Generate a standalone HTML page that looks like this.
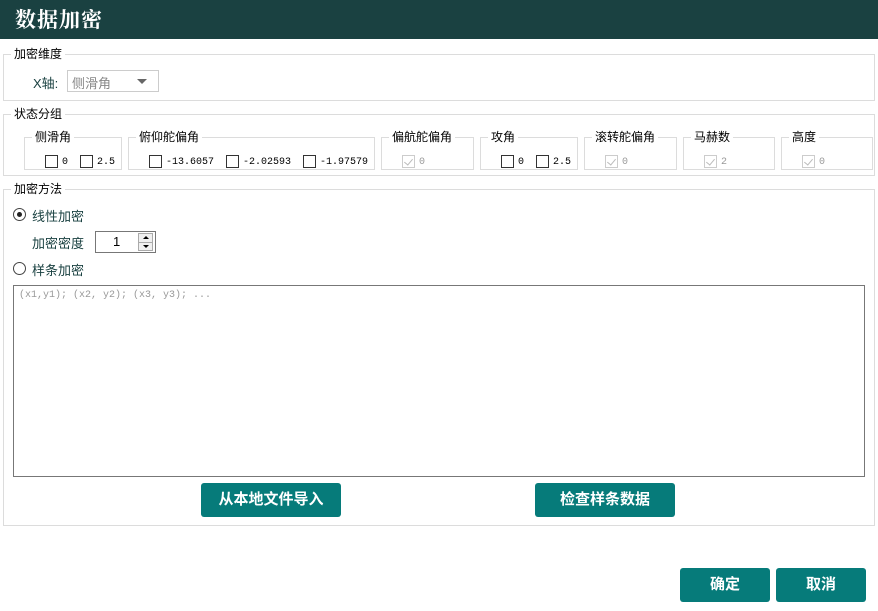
<!DOCTYPE html>
<html><head><meta charset="utf-8"><style>
*{margin:0;padding:0;box-sizing:border-box}
body{width:878px;height:611px;background:#fff;position:relative;overflow:hidden;font-family:"Liberation Sans","Noto Sans CJK SC",sans-serif;font-size:12px;color:#000}
.a{position:absolute}
.hdr{left:0;top:0;width:878px;height:39px;background:#1a4141;color:#fff;font-size:21px;font-weight:bold;padding:4px 0 0 15px;font-family:"Liberation Serif","Noto Serif CJK SC",serif;letter-spacing:1px}
.g{position:absolute;border:1px solid #dcdcdc}
.lg{position:absolute;background:#fff;padding:0 3px;font-size:12px;line-height:14px;white-space:nowrap}
.cb{position:absolute;width:13px;height:13px;border:1px solid #333;background:#fff}
.cd{position:absolute;width:13px;height:13px;border:1px solid #ccc;background:#fff}
.cd:after{content:"";position:absolute;left:3px;top:1px;width:4px;height:7px;border-right:1px solid #bbb;border-bottom:1px solid #bbb;transform:rotate(40deg)}
.t{position:absolute;font-family:"Liberation Mono",monospace;font-size:10px;line-height:13px;white-space:nowrap}
.td{color:#999}
.btn{position:absolute;background:#067b7a;color:#fff;border-radius:3px;font-size:15px;font-weight:bold;text-align:center;line-height:33px;height:34px}
</style></head><body>
<div class="a hdr">数据加密</div>

<div class="g" style="left:3px;top:54px;width:872px;height:47px"></div>
<div class="lg" style="left:11px;top:47px">加密维度</div>
<div class="a" style="left:33px;top:73px;color:#1a4141;font-size:13px">X轴:</div>
<div class="a" style="left:67px;top:70px;width:92px;height:22px;border:1px solid #ccc;color:#888;font-size:13px;padding:2px 0 0 4px">侧滑角<span style="position:absolute;left:69px;top:8px;border-left:5px solid transparent;border-right:5px solid transparent;border-top:5px solid #666"></span></div>

<div class="g" style="left:3px;top:114px;width:872px;height:62px"></div>
<div class="lg" style="left:11px;top:107px">状态分组</div>

<div class="g" style="left:24px;top:137px;width:98px;height:33px"></div><div class="lg" style="left:32px;top:130px">侧滑角</div>
<div class="cb" style="left:45px;top:155px"></div><div class="t" style="left:62px;top:156px">0</div>
<div class="cb" style="left:80px;top:155px"></div><div class="t" style="left:97px;top:156px">2.5</div>

<div class="g" style="left:128px;top:137px;width:247px;height:33px"></div><div class="lg" style="left:136px;top:130px">俯仰舵偏角</div>
<div class="cb" style="left:149px;top:155px"></div><div class="t" style="left:166px;top:156px">-13.6057</div>
<div class="cb" style="left:226px;top:155px"></div><div class="t" style="left:243px;top:156px">-2.02593</div>
<div class="cb" style="left:303px;top:155px"></div><div class="t" style="left:320px;top:156px">-1.97579</div>

<div class="g" style="left:381px;top:137px;width:93px;height:33px"></div><div class="lg" style="left:389px;top:130px">偏航舵偏角</div>
<div class="cd" style="left:402px;top:155px"></div><div class="t td" style="left:419px;top:156px">0</div>

<div class="g" style="left:480px;top:137px;width:98px;height:33px"></div><div class="lg" style="left:488px;top:130px">攻角</div>
<div class="cb" style="left:501px;top:155px"></div><div class="t" style="left:518px;top:156px">0</div>
<div class="cb" style="left:536px;top:155px"></div><div class="t" style="left:553px;top:156px">2.5</div>

<div class="g" style="left:584px;top:137px;width:93px;height:33px"></div><div class="lg" style="left:592px;top:130px">滚转舵偏角</div>
<div class="cd" style="left:605px;top:155px"></div><div class="t td" style="left:622px;top:156px">0</div>

<div class="g" style="left:683px;top:137px;width:92px;height:33px"></div><div class="lg" style="left:691px;top:130px">马赫数</div>
<div class="cd" style="left:704px;top:155px"></div><div class="t td" style="left:721px;top:156px">2</div>

<div class="g" style="left:781px;top:137px;width:92px;height:33px"></div><div class="lg" style="left:789px;top:130px">高度</div>
<div class="cd" style="left:802px;top:155px"></div><div class="t td" style="left:819px;top:156px">0</div>

<div class="g" style="left:3px;top:189px;width:872px;height:337px"></div>
<div class="lg" style="left:11px;top:182px">加密方法</div>
<div class="a" style="left:13px;top:208px;width:13px;height:13px;border:1px solid #444;border-radius:50%"><div style="position:absolute;left:3px;top:3px;width:5px;height:5px;border-radius:50%;background:#222"></div></div>
<div class="a" style="left:32px;top:206px;font-size:13px;color:#1a4141">线性加密</div>
<div class="a" style="left:32px;top:233px;font-size:13px;color:#1a4141">加密密度</div>
<div class="a" style="left:95px;top:231px;width:61px;height:22px;border:1px solid #777;font-size:13px;padding:2px 0 0 17px">1</div>
<div class="a" style="left:138px;top:233px;width:15px;height:18px;border:1px solid #aaa;background:#f0f0f0"><div style="position:absolute;left:4px;top:2px;border-left:3px solid transparent;border-right:3px solid transparent;border-bottom:3px solid #000"></div><div style="position:absolute;left:0;top:8px;width:13px;border-top:1px solid #aaa"></div><div style="position:absolute;left:4px;top:11px;border-left:3px solid transparent;border-right:3px solid transparent;border-top:3px solid #000"></div></div>
<div class="a" style="left:13px;top:262px;width:13px;height:13px;border:1px solid #444;border-radius:50%"></div>
<div class="a" style="left:32px;top:260px;font-size:13px;color:#1a4141">样条加密</div>
<div class="a" style="left:13px;top:285px;width:852px;height:192px;border:1px solid #777"></div>
<div class="a" style="left:19px;top:290px;font-family:'Liberation Mono',monospace;font-size:10px;color:#999">(x1,y1); (x2, y2); (x3, y3); ...</div>

<div class="btn" style="left:201px;top:483px;width:140px">从本地文件导入</div>
<div class="btn" style="left:535px;top:483px;width:140px">检查样条数据</div>
<div class="btn" style="left:680px;top:568px;width:90px">确定</div>
<div class="btn" style="left:776px;top:568px;width:90px">取消</div>
</body></html>
